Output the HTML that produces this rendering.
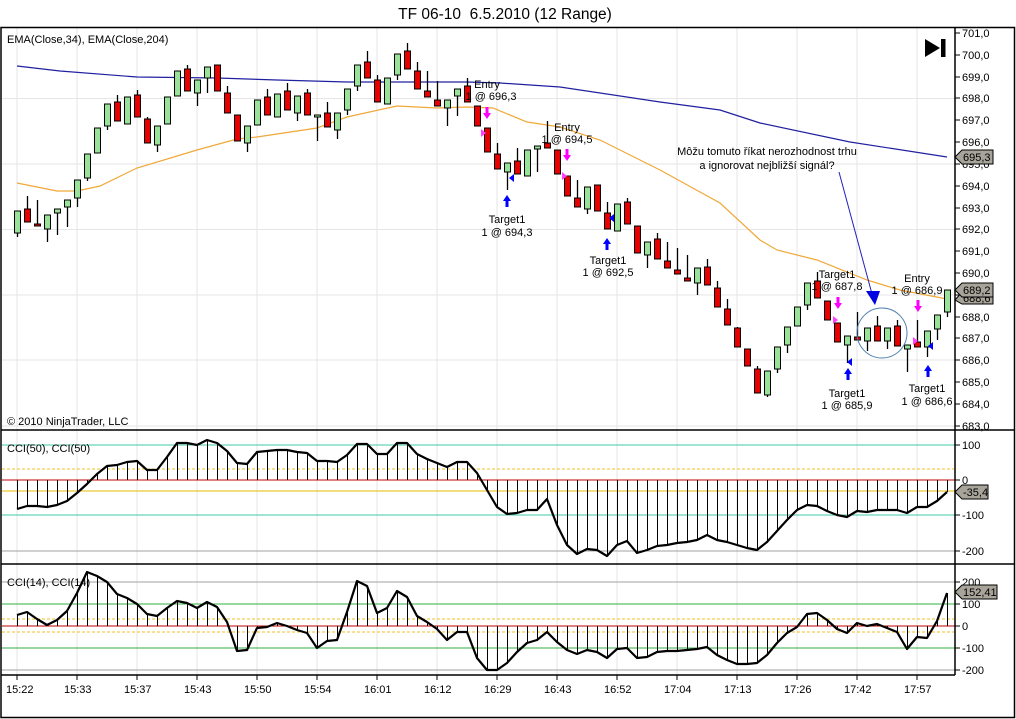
<!DOCTYPE html>
<html><head><meta charset="utf-8"><style>
body{margin:0;background:#fff;width:1016px;height:719px;overflow:hidden}
svg{display:block;font-family:"Liberation Sans",Arial,sans-serif}
</style></head><body>
<svg id="s" width="1016" height="719" viewBox="0 0 1016 719" xmlns="http://www.w3.org/2000/svg">
<rect x="0" y="0" width="1016" height="719" fill="#fff"/>
<text x="505" y="19" font-size="15.5" text-anchor="middle" fill="#000">TF 06-10 &#160;6.5.2010 (12 Range)</text>
<g id="grid" stroke="#e6e6e6" stroke-width="1"></g>
<g id="levels"></g>
<g id="hist" stroke="#000" stroke-width="1"></g>
<g id="ema"></g>
<g id="candles"></g>
<g id="lines" fill="none" stroke="#000" stroke-width="2.2" stroke-linejoin="round"></g>
<g stroke="#000" stroke-width="1.5" fill="none">
<rect x="1" y="27.5" width="1013.5" height="690"/>
<line x1="955" y1="27" x2="955" y2="675"/>
<line x1="1" y1="430" x2="1015" y2="430"/>
<line x1="1" y1="564" x2="1015" y2="564"/>
<line x1="1" y1="675" x2="955" y2="675"/>
</g>
<g id="ticks" stroke="#000" stroke-width="1"></g>
<g font-size="11" fill="#000">
<text x="7" y="43">EMA(Close,34), EMA(Close,204)</text>
<text x="7" y="425">© 2010 NinjaTrader, LLC</text>
<text x="7" y="452">CCI(50), CCI(50)</text>
<text x="7" y="586">CCI(14), CCI(14)</text>
</g>
<g font-size="11" fill="#000" id="axis">
<text x="962" y="37">701,0</text><text x="962" y="59">700,0</text><text x="962" y="81">699,0</text><text x="962" y="102">698,0</text><text x="962" y="124">697,0</text><text x="962" y="146">696,0</text><text x="962" y="168">695,0</text><text x="962" y="190">694,0</text><text x="962" y="212">693,0</text><text x="962" y="233">692,0</text><text x="962" y="255">691,0</text><text x="962" y="277">690,0</text><text x="962" y="299">689,0</text><text x="962" y="321">688,0</text><text x="962" y="342">687,0</text><text x="962" y="364">686,0</text><text x="962" y="386">685,0</text><text x="962" y="408">684,0</text><text x="962" y="430">683,0</text>
<text x="962" y="449">100</text><text x="962" y="484">0</text><text x="962" y="519">-100</text><text x="962" y="555">-200</text>
<text x="962" y="586">200</text><text x="962" y="608">100</text><text x="962" y="630">0</text><text x="962" y="652">-100</text><text x="962" y="674">-200</text>
<text x="6" y="693">15:22</text><text x="64" y="693">15:33</text><text x="124" y="693">15:37</text><text x="184" y="693">15:43</text><text x="244" y="693">15:50</text><text x="304" y="693">15:54</text><text x="364" y="693">16:01</text><text x="424" y="693">16:12</text><text x="484" y="693">16:29</text><text x="544" y="693">16:43</text><text x="604" y="693">16:52</text><text x="664" y="693">17:04</text><text x="724" y="693">17:13</text><text x="784" y="693">17:26</text><text x="844" y="693">17:42</text><text x="904" y="693">17:57</text>
</g>
<g font-size="11">
<path d="M955,300 L962,292 L993,292 L993,304 L962,304 Z" fill="#a8a49a" stroke="#000"/>
<text x="963" y="302" fill="#000">688,6</text>
<path d="M955,290 L962,283 L993,283 L993,297 L962,297 Z" fill="#a8a49a" stroke="#000"/>
<text x="963" y="294" fill="#000">689,2</text>
<path d="M955,157 L962,150 L993,150 L993,164 L962,164 Z" fill="#a8a49a" stroke="#000"/>
<text x="963" y="161" fill="#000">695,3</text>
<path d="M955,492 L962,485 L988,485 L988,499 L962,499 Z" fill="#a8a49a" stroke="#000"/>
<text x="963" y="496" fill="#000">-35,4</text>
<path d="M955,592 L962,585 L997,585 L997,599 L962,599 Z" fill="#a8a49a" stroke="#000"/>
<text x="963" y="596" fill="#000">152,41</text>
</g>
<path d="M925,39 L940,48 L925,57 Z" fill="#000"/><rect x="941" y="39" width="4.5" height="18" fill="#000"/>
<g font-size="11" fill="#000" text-anchor="middle">
<text x="487" y="88">Entry</text><text x="491" y="100">1 @ 696,3</text>
<text x="567" y="131">Entry</text><text x="567" y="143">1 @ 694,5</text>
<text x="507" y="223">Target1</text><text x="507" y="236">1 @ 694,3</text>
<text x="608" y="264">Target1</text><text x="608" y="276">1 @ 692,5</text>
<text x="837" y="278">Target1</text><text x="837" y="290">1 @ 687,8</text>
<text x="917" y="282">Entry</text><text x="917" y="294">1 @ 686,9</text>
<text x="847" y="397">Target1</text><text x="847" y="409">1 @ 685,9</text>
<text x="927" y="392">Target1</text><text x="927" y="405">1 @ 686,6</text>
<text x="767" y="155">Môžu tomuto říkat nerozhodnost trhu</text>
<text x="767" y="169">a ignorovat nejbližší signál?</text>
</g>
<line x1="839" y1="172" x2="872" y2="294" stroke="#2020c0" stroke-width="1"/>
<path d="M866,291 L880,291 L875,305 Z" fill="#0000e0"/>
<circle cx="882" cy="333" r="25" fill="none" stroke="#5080b0" stroke-width="1"/>
<g id="arrows"></g>
</svg>
<script>
const NS="http://www.w3.org/2000/svg";
function el(p,t,a){const e=document.createElementNS(NS,t);for(const k in a)e.setAttribute(k,a[k]);document.getElementById(p).appendChild(e);return e;}
for(let x=17;x<955;x+=60){el('grid','line',{x1:x,y1:28,x2:x,y2:675});}
[98.5,164,229.5,295,360,426].forEach(y=>el('grid','line',{x1:2,y1:y,x2:955,y2:y}));
const ty=[33,55,77,98,120,142,164,186,208,229,251,273,295,317,338,360,382,404,426,445,480,515,551,582,604,626,648,670];
ty.forEach(y=>el('ticks','line',{x1:955,y1:y,x2:960,y2:y}));
for(let x=17;x<955;x+=60)el('ticks','line',{x1:x,y1:675,x2:x,y2:680});
function L(y,c,d){el('levels','line',{x1:2,y1:y,x2:955,y2:y,stroke:c,'stroke-width':1,'stroke-dasharray':d||''});}
L(445,'#40c8a8');L(515,'#40c8a8');L(551,'#a0a0a0');L(469,'#f0c020','3,2');L(491,'#e8b800');L(480,'#c00000');
L(582,'#a0a0a0');L(670,'#a0a0a0');L(604,'#30b040');L(648,'#30b040');L(619,'#f0c020','3,2');L(632,'#f0c020','3,2');L(626,'#c00000');
const C=[[211,233,211,237,'g'],[209,222,196,222,'r'],[224,226,200,226,'r'],[215,229,215,242,'g'],[209,213,209,235,'g'],[200,207,200,227,'g'],[180,198,180,207,'g'],[154,178,154,181,'g'],[128,153,128,153,'g'],[104,126,104,130,'g'],
[102,121,95,121,'r'],[97,124,97,124,'g'],[95,117,90,117,'r'],[119,143,117,143,'r'],[126,145,126,152,'g'],[97,124,97,124,'g'],[71,96,71,96,'g'],[69,91,65,91,'r'],[80,93,80,106,'g'],[67,78,67,93,'g'],
[65,91,65,91,'r'],[93,113,86,113,'r'],[115,141,115,141,'r'],[126,143,126,152,'g'],[100,125,100,125,'g'],[97,115,89,115,'r'],[94,117,94,117,'g'],[91,110,83,110,'r'],[96,113,96,121,'g'],[93,115,89,115,'r'],
[115,117,115,141,'g'],[113,127,102,127,'r'],[113,130,113,139,'g'],[89,110,89,115,'g'],[65,86,65,91,'g'],[62,78,51,78,'r'],[80,102,75,102,'r'],[78,104,78,104,'g'],[54,75,54,80,'g'],[51,69,43,69,'r'],
[71,89,62,89,'r'],[91,97,71,97,'r'],[100,106,81,106,'r'],[100,108,100,126,'g'],[89,96,89,116,'g'],[86,102,78,102,'r'],[106,126,106,126,'r'],[128,152,128,152,'r'],[154,169,143,169,'r'],[163,172,163,190,'g'],
[161,174,148,174,'r'],[150,176,150,176,'g'],[146,149,146,172,'g'],[143,148,121,148,'r'],[150,174,150,174,'r'],[176,196,176,196,'r'],[198,207,180,207,'r'],[187,209,187,214,'g'],[185,211,185,211,'r'],[213,229,202,229,'r'],
[204,231,204,231,'g'],[202,224,198,224,'r'],[226,253,226,253,'r'],[242,255,242,268,'g'],[239,259,233,259,'r'],[261,268,242,268,'r'],[270,274,248,274,'r'],[278,281,255,281,'r'],[268,283,268,295,'g'],[267,285,259,285,'r'],
[288,307,281,307,'r'],[309,325,299,325,'r'],[328,347,327,347,'r'],[349,366,349,366,'r'],[369,393,366,393,'r'],[371,395,371,397,'g'],[347,369,347,373,'g'],[327,345,327,353,'g'],[307,326,307,326,'g'],[283,305,283,310,'g'],
[281,298,272,298,'r'],[301,320,301,320,'r'],[323,342,323,342,'r'],[336,345,336,363,'g'],[337,340,312,340,'r'],[328,341,328,351,'g'],[326,341,316,341,'r'],[328,341,328,349,'g'],[326,346,320,346,'r'],[345,349,345,372,'g'],
[342,347,320,347,'r'],[331,347,331,357,'g'],[315,329,315,340,'g'],[290,312,290,317,'g']];
C.forEach((c,i)=>{const x=17+10*i;
el('candles','line',{x1:x+.5,y1:c[2],x2:x+.5,y2:c[3],stroke:'#000','stroke-width':1.3});
el('candles','rect',{x:x-2.5,y:c[0],width:6,height:Math.max(2,c[1]-c[0]),fill:c[4]=='g'?'#98e29a':'#e60000',stroke:'#000','stroke-width':1});});
el('ema','polyline',{points:'17,183 57,191 77,191 100,186 137,168 197,150 237,139 257,137 317,128 347,117 397,106 437,108 467,107 493,108 527,122 560,127 600,140 660,170 720,203 760,240 777,250 817,260 867,280 900,290 947,299',fill:'none',stroke:'#f0a838','stroke-width':1.2});
el('ema','polyline',{points:'17,66 60,71 137,77 217,78 277,80 347,82 467,82 500,83 560,87 660,102 720,110 760,123 850,142 947,157',fill:'none',stroke:'#2020a0','stroke-width':1.2});
const A=[509,506,506,507,505,501,493,484,474,466,465,462,461,470,470,457,443,443,445,440,443,451,463,464,452,451,450,450,452,453,461,461,462,455,444,444,454,454,443,443,454,459,463,467,462,462,473,490,507,
514,513,510,510,499,525,545,554,549,550,556,545,541,553,550,546,545,543,542,540,535,540,542,545,548,550,542,531,520,510,505,506,511,515,517,511,512,510,510,510,513,507,507,501,492];
const B=[615,612,619,625,620,611,593,572,576,582,594,598,604,614,616,608,601,603,608,602,607,622,651,650,628,627,623,626,630,633,648,641,640,612,581,586,613,608,591,597,616,622,629,640,632,632,658,670,670,
663,652,643,640,632,642,650,654,650,652,658,649,648,658,657,652,651,651,650,649,647,655,660,664,664,663,655,643,633,627,614,613,620,629,633,623,626,624,628,632,649,637,638,621,593];
function draw(d,z){let p=[];d.forEach((y,i)=>{const x=17+10*i;p.push(x+','+y);el('hist','line',{x1:x+.5,y1:z,x2:x+.5,y2:y});});el('lines','polyline',{points:p.join(' ')});}
draw(A,480);draw(B,626);
function dn(x,y){el('arrows','path',{d:`M${x-1.5},${y} h3 v6 h2.5 l-4,6 l-4,-6 h2.5 z`,fill:'#ff00ff'});}
function up(x,y){el('arrows','path',{d:`M${x-1.5},${y+12} h3 v-6 h2.5 l-4,-6 l-4,6 h2.5 z`,fill:'#0000ff'});}
function rt(x,y){el('arrows','path',{d:`M${x},${y-4} l5,4 l-5,4 z`,fill:'#ff40ff'});}
function lt(x,y){el('arrows','path',{d:`M${x+5},${y-4} l-5,4 l5,4 z`,fill:'#0000ff'});}
dn(487,107);dn(567,149);dn(838,297);dn(918,300);
up(507,195);up(607,238);up(848,368);up(928,365);
rt(481,133);rt(562,176);rt(833,320);rt(913,341);
lt(509,178);lt(609,218);lt(847,362);lt(928,346);
</script>
</body></html>
